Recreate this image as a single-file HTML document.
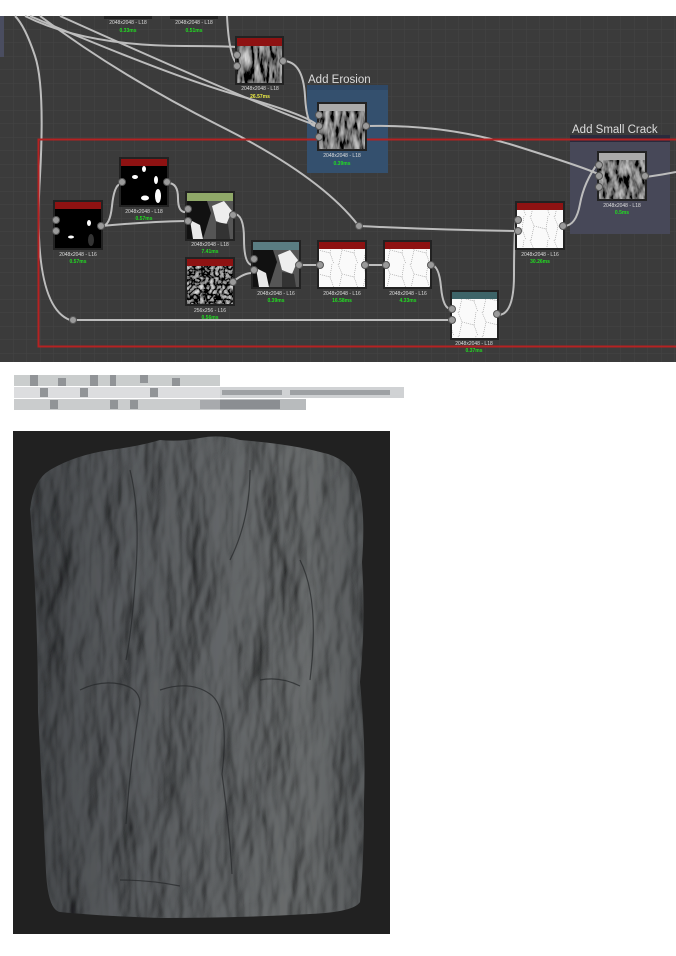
<!DOCTYPE html>
<html><head><meta charset="utf-8"><style>
html,body{margin:0;padding:0;background:#fff;width:676px;height:956px;overflow:hidden;font-family:"Liberation Sans",sans-serif}
svg{position:absolute;left:0;top:0}
</style></head><body>
<svg width="676" height="956" viewBox="0 0 676 956" xmlns="http://www.w3.org/2000/svg">
<defs>
<pattern id="grid" width="13.5" height="13.5" patternUnits="userSpaceOnUse" x="0" y="16">
<rect width="13.5" height="13.5" fill="#3b3b3b"/>
<path d="M13.5 0V13.5H0" fill="none" stroke="#444" stroke-width="1"/>
</pattern>
<filter id="nz" x="0" y="0" width="1" height="1">
<feTurbulence type="fractalNoise" baseFrequency="0.2 0.06" numOctaves="3" seed="3"/>
<feColorMatrix type="matrix" values="1.2 0 0 0 -0.4  1.2 0 0 0 -0.4  1.2 0 0 0 -0.4  0 0 0 0 1"/>
</filter>
<filter id="nzs" x="0" y="0" width="1" height="1">
<feTurbulence type="fractalNoise" baseFrequency="0.2 0.08" numOctaves="3" seed="7"/>
<feColorMatrix type="matrix" values="1.1 0 0 0 -0.35  1.1 0 0 0 -0.35  1.1 0 0 0 -0.35  0 0 0 0 1"/>
</filter>
<filter id="crf" x="0" y="0" width="1" height="1">
<feTurbulence type="turbulence" baseFrequency="0.2" numOctaves="2" seed="2"/>
<feColorMatrix type="matrix" values="1.3 0 0 0 -0.2  1.3 0 0 0 -0.2  1.3 0 0 0 -0.2  0 0 0 0 1"/>
</filter>
<pattern id="crack" width="24" height="24" patternUnits="userSpaceOnUse">
<rect width="24" height="24" fill="#fafafa"/>
<path d="M2 0l4 10 -3 14M6 10l12 3 4 11M18 13l2-13" stroke="#999" fill="none" stroke-width="0.6" stroke-dasharray="1 1"/>
</pattern>
<linearGradient id="rockH" x1="0" x2="1">
<stop offset="0" stop-color="#45484b"/><stop offset="0.25" stop-color="#56595c"/><stop offset="0.55" stop-color="#626567"/><stop offset="0.8" stop-color="#696c6d"/><stop offset="1" stop-color="#55585a"/>
</linearGradient>
<filter id="rockf" x="0" y="0" width="1" height="1">
<feTurbulence type="fractalNoise" baseFrequency="0.022 0.008" numOctaves="4" seed="11" result="t"/>
<feDiffuseLighting in="t" surfaceScale="10" lighting-color="#ffffff" diffuseConstant="1.05" result="l">
<feDistantLight azimuth="200" elevation="50"/>
</feDiffuseLighting>
<feBlend in="l" in2="SourceGraphic" mode="multiply" result="b"/>
<feComposite in="b" in2="SourceAlpha" operator="in"/>
</filter>
<clipPath id="rc"><path d="M30 510q3-30 20-40q25-15 60-20q30-4 50-10q20 2 40 -2q20 -4 40 2q50 4 80 12q30 6 38 30q8 30 4 80q4 60 -2 120q6 60 4 120q0 60 -4 100q-6 10 -50 12q-70 4 -150 4q-60 -2 -100 -6q-12 -2 -14 -40q-4 -80 -8 -160q0 -100 -8 -204z"/></clipPath>
</defs>

<rect x="0" y="16" width="676" height="346" fill="url(#grid)"/>
<rect x="0" y="16" width="4" height="41" fill="#4a4d60"/>

<rect x="307" y="85" width="81" height="88" fill="#34506e"/>
<rect x="307" y="85" width="81" height="5" fill="#2e4866"/>
<text x="308" y="83" font-size="11.5" fill="#ddd">Add Erosion</text>
<rect x="570" y="135" width="100" height="99" fill="#474858"/>
<rect x="570" y="135" width="100" height="7" fill="#2a2a3c"/>
<text x="572" y="133" font-size="11.5" fill="#ddd">Add Small Crack</text>

<g fill="none" stroke="#bdbdbd" stroke-width="2">
<path d="M15 16q10 10 20 40t5 120q-8 130 30 144"/>
<path d="M25 16q60 30 160 30t50 8"/>
<path d="M227 16q2 40 10 48"/>
<path d="M30 16q140 60 210 80t78 30"/>
<path d="M40 16q80 60 180 110t138 99"/>
<path d="M60 16q200 90 258 110"/>
<path d="M283 61q20 0 22 35t13 29"/>
<path d="M366 126q80 -2 150 20t82 28"/>
<path d="M102 226q8 0 10-20t8 -22"/>
<path d="M102 226q40 -4 84 -5"/>
<path d="M168 183q10 0 10 15t8 14"/>
<path d="M234 214q10 0 10 25t8 26"/>
<path d="M234 281q10 -8 18 -8"/>
<path d="M300 265h18M366 265h18"/>
<path d="M431 265q8 0 10 22t10 22"/>
<path d="M359 226q80 4 157 5"/>
<path d="M72 320h379"/>
<path d="M498 315q16 0 16-40t2-55"/>
<path d="M564 226q12 0 16-22t18-41"/>
<path d="M646 177q15 -2 30 -5"/>
</g>

<rect x="38.5" y="139.5" width="650" height="207" fill="none" stroke="#b52222" stroke-width="2"/>

<g font-size="5" text-anchor="middle">
<rect x="104" y="16" width="48" height="3" fill="#222"/>
<text x="128" y="24" fill="#ddd">2048x2048 - L18</text><text x="128" y="32" fill="#2d2" font-weight="bold">0.33ms</text>
<rect x="170" y="16" width="48" height="3" fill="#222"/>
<text x="194" y="24" fill="#ddd">2048x2048 - L18</text><text x="194" y="32" fill="#2d2" font-weight="bold">0.51ms</text>

<rect x="235" y="36" width="49" height="49" fill="#222"/><rect x="237" y="38" width="45" height="8" fill="#8e1212"/>
<rect x="237" y="46" width="45" height="37" filter="url(#nz)"/>
<text x="260" y="90" fill="#ddd">2048x2048 - L18</text><text x="260" y="98" fill="#ee4" font-weight="bold">26.57ms</text>

<rect x="317" y="102" width="50" height="49" fill="#222"/><rect x="319" y="104" width="46" height="7" fill="#aaa"/>
<rect x="319" y="111" width="46" height="38" filter="url(#nz)"/>
<text x="342" y="157" fill="#ddd">2048x2048 - L18</text><text x="342" y="165" fill="#2d2" font-weight="bold">0.39ms</text>

<rect x="597" y="151" width="50" height="50" fill="#222"/><rect x="599" y="153" width="46" height="7" fill="#aaa"/>
<rect x="599" y="160" width="46" height="39" filter="url(#nzs)"/>
<text x="622" y="207" fill="#ddd">2048x2048 - L18</text><text x="622" y="214" fill="#2d2" font-weight="bold">0.5ms</text>

<rect x="53" y="200" width="50" height="50" fill="#222"/><rect x="55" y="202" width="46" height="7" fill="#8e1212"/>
<rect x="55" y="209" width="46" height="39" fill="#000"/>
<ellipse cx="89" cy="223" rx="2" ry="3" fill="#fff"/><ellipse cx="71" cy="237" rx="3" ry="1.5" fill="#fff"/><ellipse cx="91" cy="240" rx="3" ry="6" fill="#333"/>
<text x="78" y="256" fill="#ddd">2048x2048 - L16</text><text x="78" y="263" fill="#2d2" font-weight="bold">0.57ms</text>

<rect x="119" y="157" width="50" height="50" fill="#222"/><rect x="121" y="159" width="46" height="7" fill="#8e1212"/>
<rect x="121" y="166" width="46" height="39" fill="#000"/>
<ellipse cx="135" cy="177" rx="3" ry="2" fill="#fff"/><ellipse cx="156" cy="180" rx="2" ry="4" fill="#fff"/><ellipse cx="145" cy="198" rx="4" ry="2.5" fill="#fff"/><ellipse cx="158" cy="196" rx="3" ry="7" fill="#fff"/><ellipse cx="144" cy="169" rx="2" ry="3" fill="#fff"/>
<text x="144" y="213" fill="#ddd">2048x2048 - L18</text><text x="144" y="220" fill="#2d2" font-weight="bold">0.57ms</text>

<rect x="185" y="191" width="50" height="50" fill="#222"/><rect x="187" y="193" width="46" height="8" fill="#8fa868"/>
<rect x="187" y="201" width="46" height="38" fill="#555"/>
<path d="M187 201h20l4 12-8 26h-16z" fill="#111"/><path d="M212 206l12-5 8 10-6 14-10-4z" fill="#eee"/><path d="M190 220l10 5 3 14h-10z" fill="#e8e8e8"/><path d="M216 222l12 2 2 15h-14z" fill="#333"/>
<text x="210" y="246" fill="#ddd">2048x2048 - L18</text><text x="210" y="253" fill="#2d2" font-weight="bold">7.41ms</text>

<rect x="185" y="257" width="50" height="49" fill="#222"/><rect x="187" y="259" width="46" height="7" fill="#8e1212"/>
<rect x="187" y="266" width="46" height="38" filter="url(#crf)"/>
<text x="210" y="312" fill="#ddd">256x256 - L16</text><text x="210" y="319" fill="#2d2" font-weight="bold">0.56ms</text>

<rect x="251" y="240" width="50" height="49" fill="#222"/><rect x="253" y="242" width="46" height="8" fill="#5a7d82"/>
<rect x="253" y="250" width="46" height="37" fill="#555"/>
<path d="M253 250h20l4 12-8 25h-16z" fill="#111"/><path d="M278 255l12-5 8 10-6 14-10-4z" fill="#eee"/><path d="M256 268l10 5 3 14h-10z" fill="#e8e8e8"/><path d="M282 272l12 2 2 13h-14z" fill="#333"/>
<text x="276" y="295" fill="#ddd">2048x2048 - L16</text><text x="276" y="302" fill="#2d2" font-weight="bold">0.39ms</text>

<rect x="317" y="240" width="50" height="49" fill="#222"/><rect x="319" y="242" width="46" height="7" fill="#8e1212"/>
<rect x="319" y="249" width="46" height="38" fill="url(#crack)"/>
<text x="342" y="295" fill="#ddd">2048x2048 - L16</text><text x="342" y="302" fill="#2d2" font-weight="bold">16.58ms</text>

<rect x="383" y="240" width="49" height="49" fill="#222"/><rect x="385" y="242" width="45" height="7" fill="#8e1212"/>
<rect x="385" y="249" width="45" height="38" fill="url(#crack)"/>
<text x="408" y="295" fill="#ddd">2048x2048 - L16</text><text x="408" y="302" fill="#2d2" font-weight="bold">4.33ms</text>

<rect x="450" y="290" width="49" height="50" fill="#222"/><rect x="452" y="292" width="45" height="7" fill="#3d6468"/>
<rect x="452" y="299" width="45" height="39" fill="url(#crack)"/>
<text x="474" y="345" fill="#ddd">2048x2048 - L18</text><text x="474" y="352" fill="#2d2" font-weight="bold">0.37ms</text>

<rect x="515" y="201" width="50" height="49" fill="#222"/><rect x="517" y="203" width="46" height="7" fill="#8e1212"/>
<rect x="517" y="210" width="46" height="38" fill="url(#crack)"/>
<text x="540" y="256" fill="#ddd">2048x2048 - L16</text><text x="540" y="263" fill="#2d2" font-weight="bold">30.26ms</text>
</g>

<g fill="#9a9a9a" stroke="#555" stroke-width="1">
<circle cx="237" cy="55" r="3.5"/><circle cx="237" cy="66" r="3.5"/><circle cx="283" cy="61" r="3.5"/>
<circle cx="319" cy="115" r="3.5"/><circle cx="319" cy="126" r="3.5"/><circle cx="319" cy="137" r="3.5"/><circle cx="366" cy="126" r="3.5"/>
<circle cx="599" cy="165" r="3.5"/><circle cx="599" cy="176" r="3.5"/><circle cx="599" cy="187" r="3.5"/><circle cx="645" cy="176" r="3.5"/>
<circle cx="56" cy="220" r="3.5"/><circle cx="56" cy="231" r="3.5"/><circle cx="101" cy="226" r="3.5"/>
<circle cx="122" cy="182" r="3.5"/><circle cx="167" cy="182" r="3.5"/>
<circle cx="188" cy="209" r="3.5"/><circle cx="188" cy="221" r="3.5"/><circle cx="233" cy="215" r="3.5"/>
<circle cx="233" cy="282" r="3.5"/>
<circle cx="254" cy="259" r="3.5"/><circle cx="254" cy="270" r="3.5"/><circle cx="299" cy="265" r="3.5"/>
<circle cx="320" cy="265" r="3.5"/><circle cx="365" cy="265" r="3.5"/>
<circle cx="386" cy="265" r="3.5"/><circle cx="431" cy="265" r="3.5"/>
<circle cx="452" cy="309" r="3.5"/><circle cx="452" cy="320" r="3.5"/><circle cx="497" cy="314" r="3.5"/>
<circle cx="518" cy="220" r="3.5"/><circle cx="518" cy="231" r="3.5"/><circle cx="563" cy="226" r="3.5"/>
<circle cx="73" cy="320" r="3.5"/><circle cx="359" cy="226" r="3.5"/>
</g>

<g>
<rect x="14" y="375" width="206" height="11" fill="#b8bcbc"/>
<rect x="14" y="387" width="390" height="11" fill="#d0d2d4"/>
<rect x="14" y="399" width="292" height="11" fill="#b8bbbd"/>
<g fill="#6c7074">
<rect x="30" y="375" width="8" height="11"/><rect x="58" y="378" width="8" height="8"/><rect x="90" y="375" width="8" height="11"/><rect x="110" y="375" width="6" height="11"/><rect x="140" y="375" width="8" height="8"/><rect x="172" y="378" width="8" height="8"/>
<rect x="40" y="388" width="8" height="9"/><rect x="80" y="388" width="8" height="9"/><rect x="150" y="388" width="8" height="9"/><rect x="222" y="390" width="60" height="5" opacity="0.5"/><rect x="290" y="390" width="100" height="5" opacity="0.5"/>
<rect x="50" y="400" width="8" height="9"/><rect x="110" y="400" width="8" height="9"/><rect x="130" y="400" width="8" height="9"/><rect x="200" y="400" width="80" height="9" opacity="0.6"/>
</g>
<rect x="14" y="375" width="206" height="35" fill="#fff" opacity="0.25"/>
</g>

<rect x="13" y="431" width="377" height="503" fill="#212121"/>
<g clip-path="url(#rc)">
<rect x="20" y="430" width="360" height="500" fill="url(#rockH)" filter="url(#rockf)"/>
</g>
<g fill="none" stroke="#26282a" stroke-width="1.2" opacity="0.7" clip-path="url(#rc)">
<path d="M80 690q20 -10 40 -6t20 20q-10 60 -14 120"/>
<path d="M160 690q30 -10 50 4t12 80q8 60 10 100"/>
<path d="M260 680q20 -4 40 6"/>
<path d="M130 470q10 40 6 100t-10 90"/>
<path d="M250 470q0 50 -20 90"/>
<path d="M300 560q20 40 10 120"/>
<path d="M120 880q30 0 60 6"/>
</g>
</svg>
</body></html>
